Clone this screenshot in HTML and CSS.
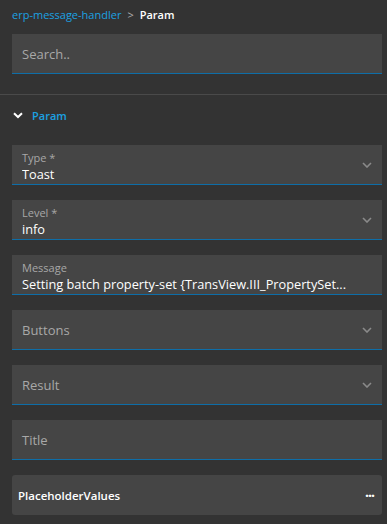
FILE: index.html
```html
<!DOCTYPE html>
<html lang="en">
<head>
    <meta charset="UTF-8">
    <meta name="viewport" content="width=device-width, initial-scale=1.0">
    <title>Param</title>
    <link rel="stylesheet" href="styles.css">
</head>
<body>
    <div class="header">
        <div class="crumbs">
            <a class="crumb-link">erp-message-handler</a>
            <span class="crumb-sep">&gt;</span>
            <span class="crumb-current">Param</span>
        </div>
        <div class="field search">
            <span class="placeholder">Search..</span>
        </div>
    </div>

    <div class="section">
        <div class="section-title">
            <svg class="section-chevron" width="10" height="7" viewBox="0 0 10 7">
                <path d="M1 1.2 L5 5 L9 1.2" fill="none" stroke="#fff" stroke-width="2"/>
            </svg>
            <span>Param</span>
        </div>

        <div class="fields">
            <div class="field select">
                <div class="field-body">
                    <span class="label">Type *</span>
                    <span class="value">Toast</span>
                </div>
                <svg class="chevron" width="10" height="6" viewBox="0 0 10 6"><path d="M1 1 L5 5 L9 1" fill="none" stroke="#8a8a8a" stroke-width="1.6"/></svg>
            </div>

            <div class="field select">
                <div class="field-body">
                    <span class="label">Level *</span>
                    <span class="value">info</span>
                </div>
                <svg class="chevron" width="10" height="6" viewBox="0 0 10 6"><path d="M1 1 L5 5 L9 1" fill="none" stroke="#8a8a8a" stroke-width="1.6"/></svg>
            </div>

            <div class="field">
                <div class="field-body">
                    <span class="label">Message</span>
                    <span class="value">Setting batch property-set {TransView.III_PropertySet...</span>
                </div>
            </div>

            <div class="field select">
                <span class="placeholder">Buttons</span>
                <svg class="chevron" width="10" height="6" viewBox="0 0 10 6"><path d="M1 1 L5 5 L9 1" fill="none" stroke="#8a8a8a" stroke-width="1.6"/></svg>
            </div>

            <div class="field select">
                <span class="placeholder">Result</span>
                <svg class="chevron" width="10" height="6" viewBox="0 0 10 6"><path d="M1 1 L5 5 L9 1" fill="none" stroke="#8a8a8a" stroke-width="1.6"/></svg>
            </div>

            <div class="field">
                <span class="placeholder">Title</span>
            </div>

            <div class="group">
                <span class="group-title">PlaceholderValues</span>
                <span class="dots">&middot;&middot;&middot;</span>
            </div>
        </div>
    </div>
</body>
</html>
```

FILE: styles.css
```css
body {
    margin: 0;
    background-color: #333333;
    font-family: "Open Sans", "Noto Sans", sans-serif;
    color: #ffffff;
}
.header {
    padding: 0 5px 20px 12px;
    border-bottom: 1px solid #4a4a4a;
}
.crumbs {
    height: 28px;
    display: flex;
    align-items: center;
    gap: 6px;
    font-size: 11px;
}
.crumb-link {
    color: #1ba1e2;
}
.crumb-sep {
    color: #b0b0b0;
}
.crumb-current {
    color: #ffffff;
    font-weight: 600;
}
.field {
    height: 40px;
    box-sizing: border-box;
    background-color: #454545;
    border-bottom: 1px solid #0e6ea8;
    display: flex;
    align-items: center;
    padding: 0 10px;
}
.search {
    margin-top: 6px;
}
.placeholder {
    color: #a8a8a8;
    font-size: 13px;
}
.section {
    padding: 0 5px 0 12px;
}
.section-title {
    height: 40px;
    display: flex;
    align-items: center;
    gap: 9px;
    padding-left: 1px;
    color: #1ba1e2;
    font-size: 11px;
    font-weight: 600;
}
.fields {
    display: flex;
    flex-direction: column;
    gap: 15px;
    margin-top: 10px;
}
.field-body {
    flex: 1;
    align-self: stretch;
    display: flex;
    flex-direction: column;
    padding-top: 6px;
    min-width: 0;
}
.label {
    color: #a8a8a8;
    font-size: 11px;
    line-height: 13px;
}
.value {
    color: #ffffff;
    font-size: 12.75px;
    line-height: 18px;
    margin-top: 1px;
    white-space: nowrap;
    overflow: hidden;
}
.chevron {
    margin-left: auto;
}
.group {
    height: 40px;
    box-sizing: border-box;
    background-color: #454545;
    border-radius: 3px;
    display: flex;
    align-items: center;
    justify-content: space-between;
    padding: 0 8px 0 6px;
}
.group-title {
    font-size: 11.5px;
    font-weight: 600;
}
.dots {
    font-size: 14px;
    font-weight: 700;
    letter-spacing: -1px;
}
```
